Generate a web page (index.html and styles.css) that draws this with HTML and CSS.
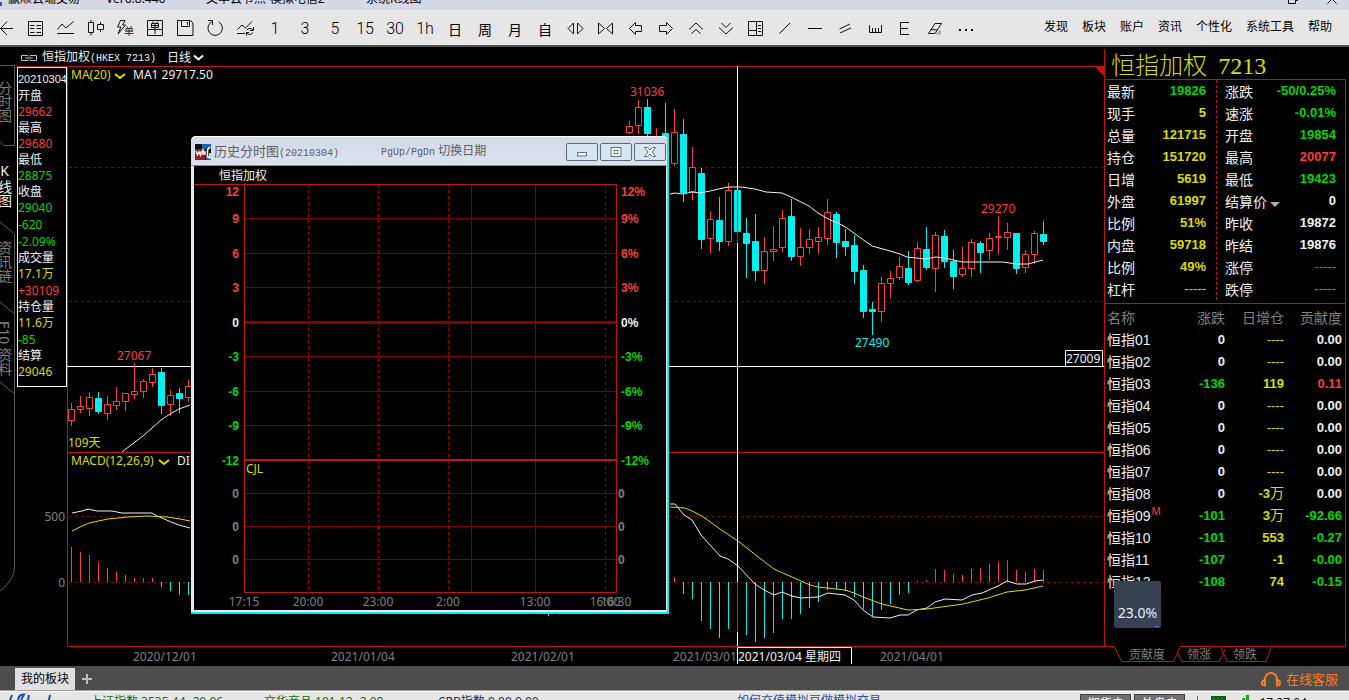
FILE: index.html
```html
<!DOCTYPE html>
<html lang="zh-CN">
<head>
<meta charset="utf-8">
<title>赢顺云端交易</title>
<link rel="stylesheet" href="styles.css">
</head>
<body>
<header class="titlebar">
  <span class="titlebar-mark"></span>
  <span class="title-app">赢顺云端交易</span>
  <span class="title-version">Ver6.8.446</span>
  <span class="title-node">文华云节点-模拟电信2</span>
  <span class="title-view">系统K线图</span>
  <svg class="title-controls" width="50" height="10" viewBox="1288 0 50 10"><path d="M1288.500 -4V3.500H1295.500V-4M1297.500 -6V.5H1296M1327.500 3.500L1337 -6M1336.500 3.500L1327 -6"/></svg>
</header>

<nav class="toolbar">
  <div class="tools">
    <button class="tool tool-back" aria-label="返回"><svg viewBox="0 0 30 30"><path d="M10 15.500H23M17 8.500L10.500 15.500L17 22"/></svg></button>
    <button class="tool" aria-label="报价"><svg viewBox="0 0 30 30"><path d="M8.500 8.500H22.500V22.500H8.500ZM10 12.500H14.500M16.500 12.500H21M10 15.500H14.500M16.500 15.500H21M10 19.500H14.500M16.500 19.500H21"/></svg></button>
    <button class="tool" aria-label="走势"><svg viewBox="0 0 30 30"><path d="M7 20.500H24M7.500 16.500L12 11L16 15L23.500 8.500"/></svg></button>
    <button class="tool" aria-label="K线"><svg viewBox="0 0 30 30"><path d="M8.500 9.500H13.500V19.500H8.500ZM11 7V9.500M11 19.500V22.500M17.500 11.500H23.500V16.500H17.500ZM20.500 9V11.500M20.500 16.500V19"/></svg></button>
    <button class="tool" aria-label="闪电下单"><svg viewBox="0 0 30 30"><path d="M15 7.500H10.500L7.500 14H11L8 21L15.500 12H12.500L15 7.500"/><text class="icon-text" x="14" y="22">单</text></svg></button>
    <button class="tool" aria-label="下单"><svg viewBox="0 0 30 30"><path d="M7.500 7.500H22.500V22.500H7.500ZM8 16.500H22M11.500 10.500H18.500V14.500H11.500ZM15 10.500V21M11.500 12.500H18.500M12.500 8.500L13.500 10M17.500 8.500L16.500 10"/></svg></button>
    <button class="tool" aria-label="保存"><svg viewBox="0 0 30 30"><path d="M7.500 7.500H20.500L23 10V22.500H7.500ZM11.500 7.500V13.500H19.500V7.500M17.500 9V12"/></svg></button>
    <button class="tool" aria-label="刷新"><svg viewBox="0 0 30 30"><path d="M12.500 8.500A7.200 7.200 0 1 0 18.500 8.800M8 7.500H12.500V12"/></svg></button>
    <button class="tool" aria-label="切换走势"><svg viewBox="0 0 30 30"><path d="M7 20.500H15M7.500 16.500L12 12L15.500 15L22 8.500M17 17A3.500 3.500 0 0 1 23 17M23.500 14V17.500H20M23 19.500A3.500 3.500 0 0 1 17 20M16.500 22.500V19.500H19"/></svg></button>
    <button class="tool">1</button>
    <button class="tool">3</button>
    <button class="tool">5</button>
    <button class="tool">15</button>
    <button class="tool">30</button>
    <button class="tool">1h</button>
    <button class="tool tool-cjk">日</button>
    <button class="tool tool-cjk">周</button>
    <button class="tool tool-cjk">月</button>
    <button class="tool tool-cjk">自</button>
    <button class="tool" aria-label="放大"><svg viewBox="0 0 30 30"><path d="M13.500 10V21L8 15.500ZM17.500 10V21L23 15.500Z"/></svg></button>
    <button class="tool" aria-label="缩小"><svg viewBox="0 0 30 30"><path d="M8.500 10V21L14.500 15.500ZM22.500 10V21L16.500 15.500Z"/></svg></button>
    <button class="tool" aria-label="左移"><svg viewBox="0 0 30 30"><path d="M9.500 15.500L15.500 9.500V12.500H21.500V18.500H15.500V21.500Z"/></svg></button>
    <button class="tool" aria-label="右移"><svg viewBox="0 0 30 30"><path d="M22.500 15.500L16.500 9.500V12.500H9.500V18.500H16.500V21.500Z"/></svg></button>
    <button class="tool" aria-label="上移"><svg viewBox="0 0 30 30"><path d="M9 16.500L16 10L23 16.500M11.500 20.500L16 16.500L20.500 20.500"/></svg></button>
    <button class="tool" aria-label="下移"><svg viewBox="0 0 30 30"><path d="M9 14.500L16 21L23 14.500M11.500 10L16 14.500L20.500 10"/></svg></button>
    <button class="tool" aria-label="布局"><svg viewBox="0 0 30 30"><path d="M8.500 8.500H22.500V22.500H8.500ZM16.500 8.500V22.500M8.500 17.500H16.500M18 12.500H21M18 15.500H21M18 18.500H21"/></svg></button>
    <button class="tool" aria-label="直线"><svg viewBox="0 0 30 30"><path d="M9.500 20.500L20 10"/></svg></button>
    <button class="tool" aria-label="水平线"><svg viewBox="0 0 30 30"><path d="M8 15.500H22"/></svg></button>
    <button class="tool" aria-label="平行线"><svg viewBox="0 0 30 30"><path d="M9.500 16L20 11M10 20L21 15"/></svg></button>
    <button class="tool" aria-label="测量"><svg viewBox="0 0 30 30"><path d="M9.500 12V19.500H21.500V12M12.500 15V19M15.500 15V19M18.500 15V19"/></svg></button>
    <button class="tool" aria-label="黄金分割"><svg viewBox="0 0 30 30"><path d="M19 9.500H10.500V21.500H19M11 15.500H18"/></svg></button>
    <button class="tool" aria-label="橡皮"><svg viewBox="0 0 30 30"><path d="M8.500 20.500L15 10.500H21.500L15 20.500ZM11 16.500L17 17"/><path class="soft" d="M16 20.500H21M18.500 18.500H21"/></svg></button>
    <button class="tool" aria-label="更多"><svg viewBox="0 0 30 30"><path class="dots" d="M9 17H11M15 17H17M21 17H23"/></svg></button>
  </div>
  <div class="menu">
    <button>发现</button><button>板块</button><button>账户</button><button>资讯</button><button>个性化</button><button>系统工具</button><button>帮助</button>
  </div>
</nav>

<main class="workspace">
  <nav class="side">
    <svg class="side-lines" viewBox="0 47 16 619"><path d="M0 65.500H14.500V145.500H4L0 141.500M0 222L14.500 234V568Q14 580 0 591M0 302L14.500 314M0 382L14.500 394"/></svg>
    <button>分时图</button>
    <button class="active">K线图</button>
    <button>资讯链</button>
    <button>F10 资料</button>
  </nav>

  <section class="stage">
    <header class="stage-head">
      <svg width="16" height="8" viewBox="0 0 16 8"><path d="M7 2.500V1.500H.5V6.500H7V5.500M9 2.500V1.500H15.500V6.500H9V5.500M4 4H12"/></svg>
      <span>恒指加权<span class="half">(HKEX 7213)</span></span>
      <button class="period">日线<svg width="11" height="6" viewBox="0 0 11 6"><path d="M1 .5L5.500 4.500L10 .5"/></svg></button>
    </header>
    <div class="plot">
      <aside class="readout">
        <dl class="info">
          <dt class="date">20210304</dt>
          <dt class="delta">开盘</dt><dd class="red">29662</dd>
          <dt>最高</dt><dd class="red">29680</dd>
          <dt>最低</dt><dd class="green">28875</dd>
          <dt>收盘</dt><dd class="green">29040</dd>
          <dd class="green delta">-620</dd><dd class="green delta">-2.09%</dd>
          <dt>成交量</dt><dd class="yellow">17.1万</dd><dd class="red delta">+30109</dd>
          <dt>持仓量</dt><dd class="yellow">11.6万</dd><dd class="green delta">-85</dd>
          <dt>结算</dt><dd class="yellow">29046</dd>
        </dl>
        <span class="axis axis-high">500</span>
        <span class="axis axis-zero">0</span>
      </aside>
      <svg class="chart" viewBox="67 66 1037 600">
        <g class="frame"><path d="M67 66.500H1104M67.500 66V646.500H1104M67 452.500H1104"/><path class="flag" d="M1095 67H1104V76Z"/></g>
        <path class="grid-dash" d="M69 167.500H1103M69 301.500H1103M69 516.500H1103M69 582.500H1103"/>
        <path class="cross" d="M67 366.500H1104M737.500 66V646"/>
        <g id="candles"></g>
        <g id="bars"></g>
        <path class="cross-over" d="M737.500 190V243M737.500 582V632"/>
        <polyline class="line-white" points="122,452 143,436 161,420 170,414 179,409 190,405"/>
        <polyline class="line-white" points="670,194 675,193 683,194 692,192 700,193 710,191 719,189 728,187 741,187 755,189 766,192 782,193 791,197 809,206 818,213 830,220 838,223 847,228 858,236 872,246 890,251 900,254 907,257 925,259 936,257 945,258 962,262 1002,262 1017,264 1028,264 1043,260"/>
        <polyline class="line-white" points="72,513 82,511 88,509 97,511 112,511 122,513 152,513 157,516 162,518 171,522 179,525 190,528"/>
        <polyline class="line-yellow" points="72,531 80,527 89,523 108,519 127,517 147,516 167,517 180,519 190,521"/>
        <polyline class="line-white" points="670,504 675,504 684,515 692,520 701,535 720,556 728,559 738,566 755,584 764,590 774,595 782,592 792,596 801,598 818,597 828,593 845,595 854,600 863,610 873,617 890,618 900,615 908,615 917,610 927,608 935,602 945,599 962,600 972,595 982,593 998,586 1007,581 1017,584 1026,584 1035,581 1043,580"/>
        <polyline class="line-yellow" points="670,507 685,508 692,511 702,516 720,529 738,541 757,556 774,569 792,577 810,585 818,587 845,590 854,593 863,597 882,604 908,610 927,609 963,604 988,598 1007,592 1025,590 1043,586"/>
        <g class="labels">
          <text class="yellow" x="71" y="79">MA(20)</text><path class="chev" d="M115 74L120 78L125 74"/>
          <text class="white" x="133" y="79">MA1 29717.50</text>
          <text class="yellow" x="71" y="465">MACD(12,26,9)</text><path class="chev" d="M159 460L164 464L169 460"/>
          <text class="white" x="177" y="465">DI</text>
          <text class="yellow" x="68" y="447">109天</text>
          <text class="red" x="117" y="360">27067</text>
          <text class="red" x="630" y="96">31036</text>
          <text class="red" x="981" y="213">29270</text>
          <text class="cyan" x="855" y="347">27490</text>
          <text class="gray" x="133" y="661">2020/12/01</text>
          <text class="gray" x="331" y="661">2021/01/04</text>
          <text class="gray" x="511" y="661">2021/02/01</text>
          <text class="gray" x="673" y="661">2021/03/01</text>
          <text class="gray" x="880" y="661">2021/04/01</text>
          <path class="tag" d="M1065.500 350.500H1102.500V366.500H1065.500ZM737.500 664V647.500H851.500V664"/>
          <text class="white" x="1066" y="363">27009</text>
          <text class="white" x="738" y="661">2021/03/04 星期四</text>
        </g>
      </svg>
    </div>

    <section class="dialog">
      <header class="dialog-bar">
        <svg width="16" height="16" viewBox="0 0 16 16"><path fill="#111" d="M0 0H16V16H0Z"/><path fill="#a01818" d="M0 5H10V16H0Z"/><path fill="#1c62a8" d="M7 0H16V5H7ZM11 11H16V16H11Z"/><path fill="none" stroke="#fff" stroke-width="1.500" d="M1 7L2.500 11L4 8L5.500 11L6.500 7M8 5V11M8 8H10V11M15 3Q12 5 12.500 8V13L15 14V9"/></svg>
        <span class="dialog-title">历史分时图<span class="half">(20210304)</span></span>
        <span class="dialog-hint"><span class="half">PgUp/PgDn</span> 切换日期</span>
        <span class="dialog-buttons">
          <button aria-label="最小化"><svg viewBox="0 0 14 12"><path d="M2.500 6.500H11.500V10H2.500Z"/></svg></button>
          <button aria-label="最大化"><svg viewBox="0 0 14 12"><path d="M2 1.500H12V10.500H2ZM5 4.500H9V7.500H5Z"/></svg></button>
          <button aria-label="关闭"><svg viewBox="0 0 14 12"><path d="M1.500 1.500H4.500L7 4L9.500 1.500H12.500L9 6L12.500 10.500H9.500L7 8L4.500 10.500H1.500L5 6Z"/></svg></button>
        </span>
      </header>
      <svg class="dialog-chart" viewBox="194 166 472 444">
        <path class="g-solid" d="M471.500 184V592M535.500 184V592M244 218.500H616M244 253.500H616M244 287.500H616M244 356.500H616M244 391.500H616M244 425.500H616M244 493.500H616M244 526.500H616M244 559.500H616"/>
        <path class="g-dash" d="M308.500 184V592M378.500 184V592M448.500 184V592M605.500 184V592"/>
        <path class="g-zero" d="M244 322.500H617"/>
        <path class="g-frame" d="M194 184.500H616.500V592.500H244.500V184"/>
        <path class="g-split" d="M244 460H616"/>
        <text class="name" x="219" y="180">恒指加权</text>
        <g class="scale left">
          <text class="red" x="239" y="196">12</text><text class="red" x="239" y="223">9</text><text class="red" x="239" y="258">6</text><text class="red" x="239" y="292">3</text><text class="white" x="239" y="327">0</text>
          <text class="green" x="239" y="361">-3</text><text class="green" x="239" y="396">-6</text><text class="green" x="239" y="430">-9</text><text class="green" x="239" y="465">-12</text>
          <text class="gray" x="239" y="498">0</text><text class="gray" x="239" y="531">0</text><text class="gray" x="239" y="564">0</text>
        </g>
        <g class="scale">
          <text class="red" x="621" y="196">12%</text><text class="red" x="621" y="223">9%</text><text class="red" x="621" y="258">6%</text><text class="red" x="621" y="292">3%</text><text class="white" x="621" y="327">0%</text>
          <text class="green" x="621" y="361">-3%</text><text class="green" x="621" y="396">-6%</text><text class="green" x="621" y="430">-9%</text><text class="green" x="621" y="465">-12%</text>
          <text class="gray" x="618" y="498">0</text><text class="gray" x="618" y="531">0</text><text class="gray" x="618" y="564">0</text>
        </g>
        <text class="yellow" x="246" y="473">CJL</text>
        <g class="times">
          <text x="244" y="606">17:15</text><text x="308" y="606">20:00</text><text x="378" y="606">23:00</text><text x="448" y="606">2:00</text><text x="535" y="606">13:00</text><text x="605" y="606">16:00</text><text x="616" y="606">16:30</text>
        </g>
      </svg>
    </section>
  </section>

  <aside class="quote">
    <h1>恒指加权 <span>7213</span></h1>
    <div class="quote-body">
      <div class="stats">
        <dl>
          <div><dt>最新</dt><dd class="green">19826</dd></div>
          <div><dt>现手</dt><dd class="yellow">5</dd></div>
          <div><dt>总量</dt><dd class="yellow">121715</dd></div>
          <div><dt>持仓</dt><dd class="yellow">151720</dd></div>
          <div><dt>日增</dt><dd class="yellow">5619</dd></div>
          <div><dt>外盘</dt><dd class="yellow">61997</dd></div>
          <div><dt>比例</dt><dd class="yellow">51%</dd></div>
          <div><dt>内盘</dt><dd class="yellow">59718</dd></div>
          <div><dt>比例</dt><dd class="yellow">49%</dd></div>
          <div><dt>杠杆</dt><dd class="yellow none">-----</dd></div>
        </dl>
        <dl>
          <div><dt>涨跌</dt><dd class="green">-50/0.25%</dd></div>
          <div><dt>速涨</dt><dd class="green">-0.01%</dd></div>
          <div><dt>开盘</dt><dd class="green">19854</dd></div>
          <div><dt>最高</dt><dd class="red">20077</dd></div>
          <div><dt>最低</dt><dd class="green">19423</dd></div>
          <div><dt class="drop">结算价</dt><dd>0</dd></div>
          <div><dt>昨收</dt><dd>19872</dd></div>
          <div><dt>昨结</dt><dd>19876</dd></div>
          <div><dt>涨停</dt><dd class="red none">-----</dd></div>
          <div><dt>跌停</dt><dd class="green none">-----</dd></div>
        </dl>
      </div>
      <table>
        <thead><tr><th>名称</th><th>涨跌</th><th>日增仓</th><th>贡献度</th></tr></thead>
        <tbody>
          <tr><th>恒指01</th><td>0</td><td class="yellow none">----</td><td>0.00</td></tr>
          <tr><th>恒指02</th><td>0</td><td class="yellow none">----</td><td>0.00</td></tr>
          <tr><th>恒指03</th><td class="green">-136</td><td class="yellow">119</td><td class="red">0.11</td></tr>
          <tr><th>恒指04</th><td>0</td><td class="yellow none">----</td><td>0.00</td></tr>
          <tr><th>恒指05</th><td>0</td><td class="yellow none">----</td><td>0.00</td></tr>
          <tr><th>恒指06</th><td>0</td><td class="yellow none">----</td><td>0.00</td></tr>
          <tr><th>恒指07</th><td>0</td><td class="yellow none">----</td><td>0.00</td></tr>
          <tr><th>恒指08</th><td>0</td><td class="yellow">-3<span class="wan">万</span></td><td>0.00</td></tr>
          <tr><th>恒指09<sup>M</sup></th><td class="green">-101</td><td class="yellow">3<span class="wan">万</span></td><td class="green">-92.66</td></tr>
          <tr><th>恒指10</th><td class="green">-101</td><td class="yellow">553</td><td class="green">-0.27</td></tr>
          <tr><th>恒指11</th><td class="green">-107</td><td class="yellow">-1</td><td class="green">-0.00</td></tr>
          <tr><th>恒指12</th><td class="green">-108</td><td class="yellow">74</td><td class="green">-0.15</td></tr>
        </tbody>
      </table>
    </div>
    <nav class="quote-tabs">
      <svg viewBox="1104 646 242 17"><path d="M1104 646.500H1114.500L1121.500 661.500H1173.500L1180.500 646.500H1345.500M1177.500 652L1182 661.500H1219L1225.500 649M1220.500 646.500L1227 661.500H1266L1271.500 646.500"/></svg>
      <button>贡献度</button><button>领涨</button><button>领跌</button>
    </nav>
    <div class="usage">23.0%</div>
  </aside>
</main>

<footer class="boards">
  <button class="board">我的板块</button>
  <button class="add" aria-label="添加板块"><svg width="10" height="10" viewBox="0 0 10 10"><path d="M5 0V10M0 5H10"/></svg></button>
  <a class="support" href="#"><svg width="20" height="16" viewBox="0 0 20 16"><path d="M4 14V8A6 6 0 0 1 16 8V14M4 9Q1 9.500 1 12Q1 14.500 4 14.500ZM16 9Q19 9.500 19 12Q19 14.500 16 14.500Z"/></svg>在线客服</a>
</footer>
<div class="status">
  <svg class="status-logo" width="60" height="8" viewBox="0 692 60 8"><path d="M12 695L10 700M18 700Q19 694 24 694.500L21 700M29 695L28 700M50 695L49 700"/></svg>
  <span class="index green-dark">上证指数 3535.44 -29.06</span>
  <span class="index green-dark">文华商品 191.12 -2.08</span>
  <span class="index navy">CRB指数 0.00 0.00</span>
  <a href="#">如何充值模拟豆做模拟交易</a>
  <span class="status-right">
    <button>期货户</button><button>外盘户</button>
    <svg width="54" height="8" viewBox="1197 692 54 8"><path fill="#ff2020" d="M1198 696H1199V700H1198Z"/><path fill="#145c14" d="M1212 696H1227V700H1212Z"/><path fill="#18a818" d="M1214 698H1216V699H1214ZM1218 698H1220V699H1218ZM1222 698H1224V699H1222ZM1243 698H1246V700H1243ZM1247 695H1250V700H1247Z"/></svg>
    <span class="clock">17:27:04</span>
  </span>
</div>
<script src="chart.js"></script>
</body>
</html>
```

FILE: styles.css
```css
* { box-sizing: border-box; margin: 0; padding: 0; }
body {
  min-height: 100vh;
  display: flex;
  flex-direction: column;
  background: #000;
  color: #f0f0f0;
  font: 12px/16px "Noto Sans", "Noto Sans CJK SC", sans-serif;
  overflow-x: hidden;
}
button {
  border: 0;
  background: none;
  color: inherit;
  font: inherit;
  white-space: nowrap;
}
svg { display: block; flex: none; fill: none; stroke: none; }
.red { color: #ff3c3c; fill: #ff3c3c; }
.green { color: #00d800; fill: #00d800; }
.yellow { color: #dcdc00; fill: #dcdc00; }
.white { color: #f0f0f0; fill: #f0f0f0; }
.gray { color: #808080; fill: #808080; }
.cyan { color: #00f0f0; fill: #00f0f0; }
.half { font-family: "Liberation Mono", monospace; font-size: 10px; }

/* title bar */
.titlebar {
  display: flex;
  align-items: flex-end;
  height: 10px;
  padding-bottom: 4px;
  overflow: hidden;
  background: #d5d9e7;
  color: #000;
  line-height: 14px;
  white-space: nowrap;
}
.titlebar-mark { width: 2px; height: 4px; margin-right: 6px; background: #2a5aa0; }
.title-app { width: 98px; }
.title-version { width: 100px; }
.title-node { width: 160px; }
.title-view { flex: 1; }
.title-controls { align-self: flex-start; margin: 0 11px -4px 0; stroke: #000; }

/* toolbar */
.toolbar {
  display: flex;
  justify-content: space-between;
  align-items: center;
  height: 37px;
  background: #e6e6e6;
  border-bottom: 2px solid #505050;
  color: #000;
}
.tools { display: flex; }
.tool {
  display: flex;
  align-items: center;
  justify-content: center;
  width: 30px;
  height: 30px;
  padding-top: 2px;
  font: 300 16px/28px Roboto, sans-serif;
}
.tool svg { width: 30px; height: 30px; margin-top: -2px; stroke: #111; }
.tool-back { width: 20px; justify-content: flex-end; overflow: hidden; }
.tool-cjk { font: 14px/28px "Noto Sans CJK SC", sans-serif; }
.icon-text { font: 10px "Noto Sans CJK SC", sans-serif; fill: #111; stroke: none; }
.tool .soft { stroke: #aaa; stroke-width: 2; }
.tool .dots { stroke-width: 2; }
.menu { display: flex; gap: 14px; padding: 0 17px 2px 0; }

/* workspace */
.workspace {
  flex: 1;
  display: grid;
  grid-template-columns: 16px minmax(0, 1fr) 245px;
}
.side {
  position: relative;
  padding-top: 34px;
  color: #808080;
}
.side-lines { position: absolute; top: 0; left: 0; width: 16px; stroke: #5a5a5a; }
.side button {
  display: flex;
  align-items: center;
  writing-mode: vertical-rl;
  width: 16px;
  height: 80px;
  padding-right: 8px;
  font-size: 14px;
  line-height: 14px;
  overflow: hidden;
}
.side .active { color: #f0f0f0; text-orientation: upright; }

.stage { position: relative; }
.stage-head {
  display: flex;
  align-items: center;
  gap: 5px;
  height: 19px;
  padding: 2px 0 0 5px;
}
.stage-head svg { stroke: #c0c0c0; }
.period { display: flex; align-items: center; gap: 2px; margin-left: 6px; }
.period svg { stroke: #fff; stroke-width: 2; }
.plot { display: grid; grid-template-columns: 51px minmax(0, 1fr); }
.readout { padding-left: 1px; border-top: 1px solid #c01410; }
.info {
  height: 320px;
  padding-top: 3px;
  border: 1px solid #fff;
  font-size: 12px;
  white-space: nowrap;
}
.info .delta { margin-top: 1px; }
.info .date { font: 11px/16px "Liberation Sans", sans-serif; }
.axis { display: block; padding-right: 2px; text-align: right; color: #808080; }
.axis-high { margin-top: 122px; }
.axis-zero { margin-top: 50px; }

.chart { width: 100%; height: auto; }
.frame path { stroke: #c01410; }
.frame .flag { fill: #c01410; stroke: none; }
.grid-dash { stroke: #800000; stroke-dasharray: 3 3; }
.cross, .tag { stroke: #fff; }
.tag { fill: #000; }
.cross-over { stroke: #e01818; }
.up { stroke: #ff3c3c; fill: #000; }
.down { stroke: #00f0f0; fill: #00f0f0; }
.line-white { stroke: #f0f0f0; }
.line-yellow { stroke: #dcdc00; }
.chev { stroke: #dcdc00; stroke-width: 2; }

/* intraday window */
.dialog {
  position: absolute;
  left: 175px;
  top: 89px;
  width: 477px;
  border: solid #e4ebf5;
  border-width: 0 2px 3px 3px;
  border-radius: 5px 5px 0 0;
  background: #000;
}
.dialog::after {
  content: "";
  position: absolute;
  inset: 3px -3px -4px -3px;
  border: solid #00f0f0;
  border-width: 0 2px 2px 0;
  pointer-events: none;
}
.dialog-bar {
  display: flex;
  align-items: center;
  height: 30px;
  margin: 0 -2px 0 -3px;
  padding: 2px 2px 0 4px;
  border-top: 1px solid #fff;
  border-bottom: 1px solid #909090;
  border-radius: 5px 5px 0 0;
  background: linear-gradient(#d3d9e8, #dae2f0);
  color: #606060;
}
.dialog-title { width: 167px; margin-left: 3px; font-size: 13px; white-space: nowrap; }
.dialog-hint { white-space: nowrap; }
.dialog-buttons { display: flex; gap: 2px; margin-left: auto; }
.dialog-buttons button {
  display: flex;
  align-items: center;
  justify-content: center;
  width: 32px;
  height: 18px;
  border: 1px solid #5c6b80;
  border-radius: 2px;
  background: #d8e4f0;
}
.dialog-buttons svg { width: 14px; height: 12px; fill: #fff; stroke: #5c6b80; }
.dialog-chart { width: 100%; }
.g-solid { stroke: #800000; }
.g-dash { stroke: #900000; stroke-dasharray: 3 3; }
.g-zero { stroke: #880000; stroke-width: 3; }
.g-frame { stroke: #c01410; }
.g-split { stroke: #c01410; stroke-width: 2; }
.name { fill: #f0f0f0; }
.scale { font: bold 12px "Liberation Sans", sans-serif; }
.left { text-anchor: end; }
.times { fill: #808080; text-anchor: middle; }

/* quote panel */
.quote {
  position: relative;
  display: flex;
  flex-direction: column;
  padding: 2px 3px 0 0;
}
.quote h1 {
  height: 30px;
  padding-left: 6px;
  border-left: 1px solid #c01410;
  color: #dcdc00;
  font: 300 24px/30px "Noto Sans CJK SC", sans-serif;
  white-space: nowrap;
}
.quote h1 span { margin-left: 6px; font-family: "Liberation Serif", serif; font-weight: 400; }
.quote-body { flex: 1; border: 1px solid #c01410; border-bottom: 0; }
.stats {
  display: grid;
  grid-template-columns: 112px 1fr;
  padding-bottom: 3px;
  border-bottom: 1px solid #c01410;
}
.stats dl { padding: 0 9px 0 8px; }
.stats dl:first-child { padding: 0 10px 0 2px; border-right: 1px dashed #c01410; }
.stats div { display: flex; justify-content: space-between; height: 22px; }
.stats dt, .quote th { font: 14px/22px "Noto Sans CJK SC", sans-serif; white-space: nowrap; }
.stats dd, .quote td { font: bold 13px/22px "Liberation Sans", sans-serif; }
.stats .none, .quote .none { font-weight: 400; }
.drop::after {
  content: "";
  display: inline-block;
  margin-left: 3px;
  border: 5px solid transparent;
  border-top-color: #b0b0b0;
  border-bottom: 0;
}
.quote table { width: 100%; border-collapse: collapse; table-layout: fixed; }
.quote tr { height: 22px; }
.quote thead th { height: 25px; color: #808080; text-align: right; }
.quote tr th:first-child { text-align: left; padding-left: 2px; }
.quote td { text-align: right; }
.quote tr > :last-child { padding-right: 3px; }
.quote thead th:nth-child(-n+2) { width: 60px; }
.quote thead th:nth-child(3) { width: 59px; }
.quote tbody th { font-family: "Liberation Sans", "Noto Sans CJK SC", sans-serif; font-size: 14px; font-weight: 400; }
.wan { font: 400 14px/16px "Noto Sans CJK SC", sans-serif; }
.quote sup { margin-left: 1px; color: #ff3c3c; font: 11px/11px "Liberation Sans", sans-serif; }
.quote-tabs {
  position: relative;
  display: flex;
  gap: 22px;
  height: 20px;
  padding-left: 25px;
  color: #808080;
}
.quote-tabs svg { position: absolute; top: 0; left: 0; width: 242px; height: 17px; stroke: #c01410; }
.quote-tabs button { position: relative; height: 17px; }
.usage {
  position: absolute;
  left: 10px;
  top: 534px;
  width: 47px;
  height: 47px;
  padding-top: 22px;
  border-radius: 2px;
  background: #384152;
  color: #e8f0ff;
  font: 14px/20px "Noto Sans", sans-serif;
  text-align: center;
}
.usage::after {
  content: "";
  position: absolute;
  right: 2px;
  bottom: 1px;
  width: 4px;
  height: 1px;
  background: #3080f0;
}

/* bottom bars */
.boards {
  display: flex;
  align-items: center;
  height: 24px;
  padding: 0 11px 0 15px;
  background: #4d4d4d;
}
.board { width: 60px; height: 22px; margin-top: 2px; background: #e0e0e0; color: #000; }
.add { margin: 2px 0 0 7px; }
.add svg { stroke: #c0c0c0; stroke-width: 2; }
.support {
  display: flex;
  align-items: center;
  gap: 5px;
  margin: 2px 0 0 auto;
  color: #ff7a20;
  font-size: 13px;
  text-decoration: none;
}
.support svg { stroke: #ff7a20; stroke-width: 2; }
.status {
  display: flex;
  height: 10px;
  padding-right: 42px;
  border-top: 1px solid #a0a0a0;
  box-shadow: inset 0 1px #fff;
  background: #e6e6e6;
  overflow: hidden;
  line-height: 18px;
  white-space: nowrap;
}
.status-logo { stroke: #1450b4; stroke-width: 2; margin: 1px 30px 0 0; }
.index { width: 174px; padding-top: 2px; }
.green-dark { color: #087808; }
.navy { color: #203060; }
.status a { margin-left: 125px; padding-top: 1px; color: #2850a0; text-decoration: none; }
.status-right { display: flex; gap: 3px; margin-left: auto; }
.status-right button {
  width: 51px;
  height: 20px;
  margin-top: 3px;
  border: 1px solid #404040;
  background: #707070;
  color: #fff;
}
.status-right svg { margin: 1px 6px 0 8px; }
.clock { color: #111; padding-top: 3px; }
```

FILE: chart.js
```js
// Each candle: x, high, body top, body bottom, low, direction (1 = up, 0 = down)
const candles = [
  [71,403,409,421,426,1],[80,396,406,410,413,1],[89,392,397,409,416,1],[98,392,398,412,414,0],
  [107,396,404,414,420,1],[116,387,401,406,410,1],[125,393,393,402,411,1],[134,363,391,395,399,1],
  [143,379,381,392,398,1],[152,368,374,383,387,1],[161,368,372,406,414,0],[170,390,395,405,416,1],
  [179,388,393,399,413,0],[188,380,386,398,402,1],
  [629,121,126,133,134,1],[638,100,107,126,134,1],[647,99,107,134,136,0],[656,128,136,140,142,1],
  [665,103,133,140,142,0],[674,109,132,164,166,1],[683,119,134,193,202,0],[692,147,167,192,200,1],
  [701,168,173,240,249,0],[710,211,219,239,253,1],[719,197,220,242,251,0],[728,183,190,242,246,1],
  [737,190,190,232,232,0],[746,218,233,244,278,0],[755,214,241,271,281,0],[764,237,251,271,284,1],
  [773,226,249,252,261,1],[782,210,218,248,252,1],[791,199,216,257,261,0],[800,228,247,257,266,1],
  [809,229,239,248,254,1],[818,227,237,242,254,1],[827,199,212,239,245,1],[836,212,214,243,258,0],
  [845,229,241,247,256,0],[854,235,245,272,284,0],[863,265,270,312,318,0],[872,302,309,312,335,0],
  [881,277,283,312,322,1],[890,271,278,284,298,1],[899,257,266,278,280,1],[908,251,268,283,285,0],
  [917,242,248,281,282,1],[926,227,249,268,270,0],[935,232,235,269,292,1],[944,230,236,262,268,0],
  [953,250,261,277,289,0],[962,247,268,275,277,1],[971,239,242,269,277,1],[980,241,243,253,273,0],
  [989,233,238,251,260,1],[998,216,236,238,254,1],[1007,223,232,238,250,1],[1016,233,233,269,274,0],
  [1025,250,254,268,273,1],[1034,231,233,255,264,1],[1043,221,234,242,245,0]
];

// MACD histogram: first x, then the end of each bar, 9 px apart
const zero = 582;
const bars = [
  [71, [547,552,555,562,568,572,575,578,578,578,587,591,595,595]],
  [548, [616]],
  [674, [577,594,599,621,629,638,629,632,635,642,638,633,619,619,614,608,602,590,589,591,597,609,616,610,604,595,593,581,580,569,570,574,575,569,568,564,562,560,570,572,569,570]]
];

function path(parent, d, cls) {
  const node = document.createElementNS("http://www.w3.org/2000/svg", "path");
  node.setAttribute("d", d);
  node.setAttribute("class", cls);
  parent.appendChild(node);
}

const candleLayer = document.getElementById("candles");
for (const [x, high, top, bottom, low, up] of candles) {
  const c = x + 0.5;
  path(candleLayer,
    `M${c} ${high}V${top}M${c} ${bottom}V${low}M${c - 3} ${top + 0.5}H${c + 3}V${bottom - 0.5}H${c - 3}Z`,
    up ? "up" : "down");
}

const barLayer = document.getElementById("bars");
for (const [start, ends] of bars) {
  ends.forEach((y, i) => path(barLayer, `M${start + i * 9 + 0.5} ${zero}V${y}`, y < zero ? "up" : "down"));
}
```
